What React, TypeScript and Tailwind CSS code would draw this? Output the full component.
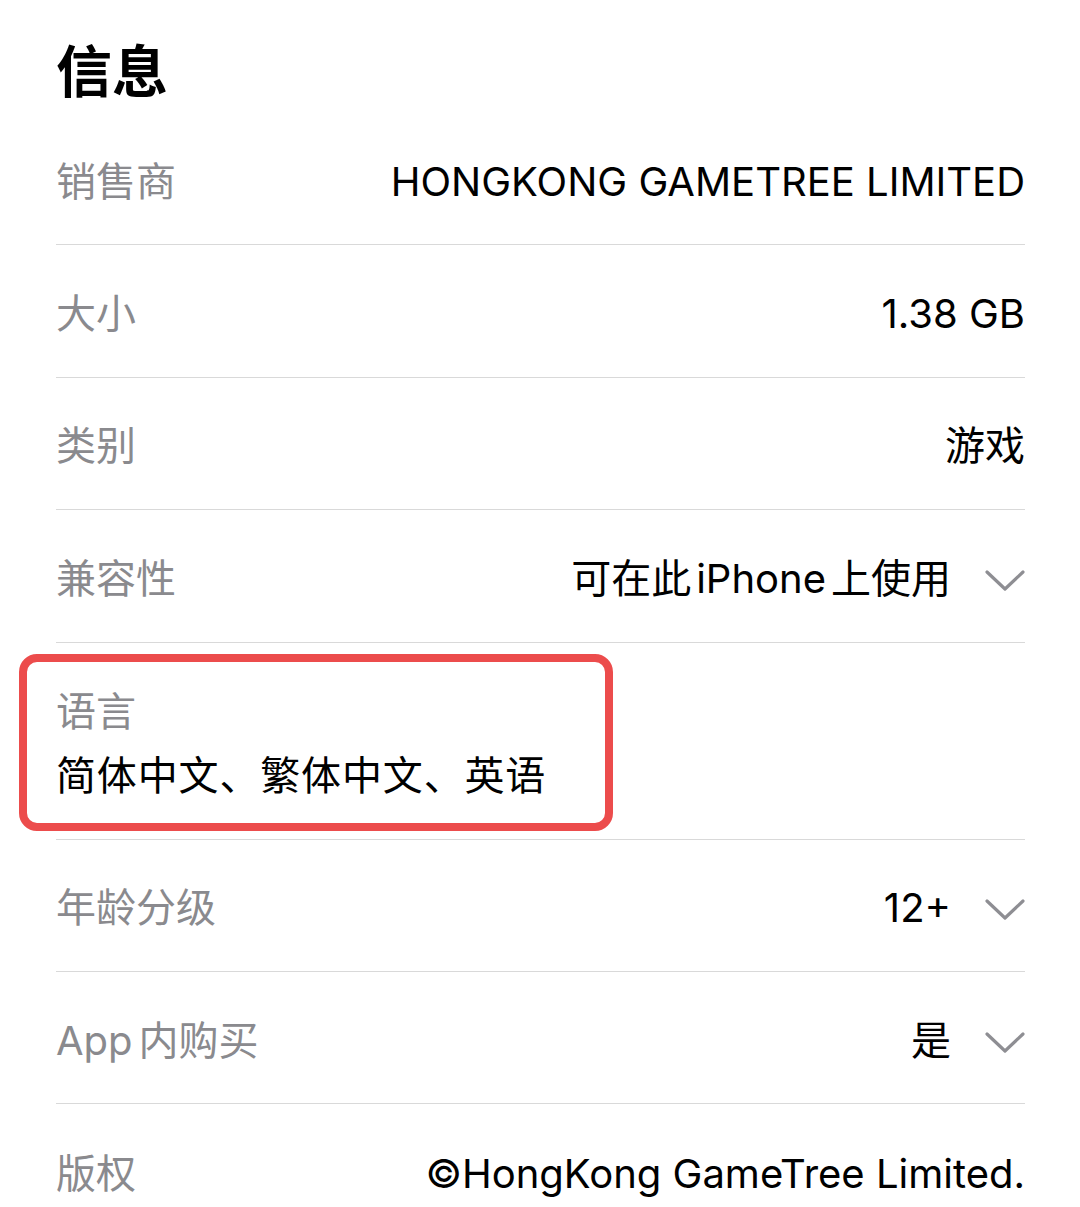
import React from 'react';

const font = { fontFamily: '"Inter", "Noto Sans CJK SC", sans-serif' };

const Chevron: React.FC = () => (
  <svg width="40" height="24" viewBox="0 0 40 24" className="shrink-0 ml-[34px] mt-[4px]">
    <polyline points="2,3 20,20 38,3" fill="none" stroke="#8e8e93" strokeWidth="3.2" strokeLinecap="round" strokeLinejoin="round" />
  </svg>
);

type RowProps = { label: React.ReactNode; value: React.ReactNode; chevron?: boolean; last?: boolean };

const Row: React.FC<RowProps> = ({ label, value, chevron, last }) => (
  <div className={`flex items-center justify-between h-[132.4px] pt-[6px] ${last ? '' : 'border-b border-[#d9d9d9]'}`}>
    <span className="text-[40px] leading-[56px] text-[#8a8a8e] whitespace-nowrap">{label}</span>
    <div className="flex items-center">
      <span className="text-[40px] leading-[56px] text-black whitespace-nowrap">{value}</span>
      {chevron && <Chevron />}
    </div>
  </div>
);

export default function App() {
  return (
    <div className="w-[1080px] h-[1207px] overflow-hidden bg-white pl-[56px] pr-[55px]" style={font}>
      {/* Heading */}
      <div className="h-[113px] pt-[38px]">
        <h1 className="text-[56px] leading-[68px] font-bold text-black">信息</h1>
      </div>

      <Row label="销售商" value="HONGKONG GAMETREE LIMITED" />
      <Row label="大小" value="1.38 GB" />
      <Row label="类别" value="游戏" />
      <Row
        label="兼容性"
        value={<>可在此<span className="mx-[5px]">iPhone</span>上使用</>}
        chevron
      />

      {/* Language row with highlight */}
      <div className="relative flex flex-col h-[197px] pt-[37px] border-b border-[#d9d9d9]">
        <span className="text-[40px] leading-[64px] text-[#8a8a8e]">语言</span>
        <span className="text-[40px] leading-[64px] text-black tracking-[0.85px]">简体中文、繁体中文、英语</span>
        <div className="absolute left-[-37px] top-[11px] w-[594px] h-[177px] border-[8px] border-[#ec4c4c] rounded-[18px]" />
      </div>

      <Row label="年龄分级" value="12+" chevron />
      <Row label={<>App<span className="ml-[6px]">内购买</span></>} value="是" chevron />
      <Row label="版权" value="©HongKong GameTree Limited." last />
    </div>
  );
}
